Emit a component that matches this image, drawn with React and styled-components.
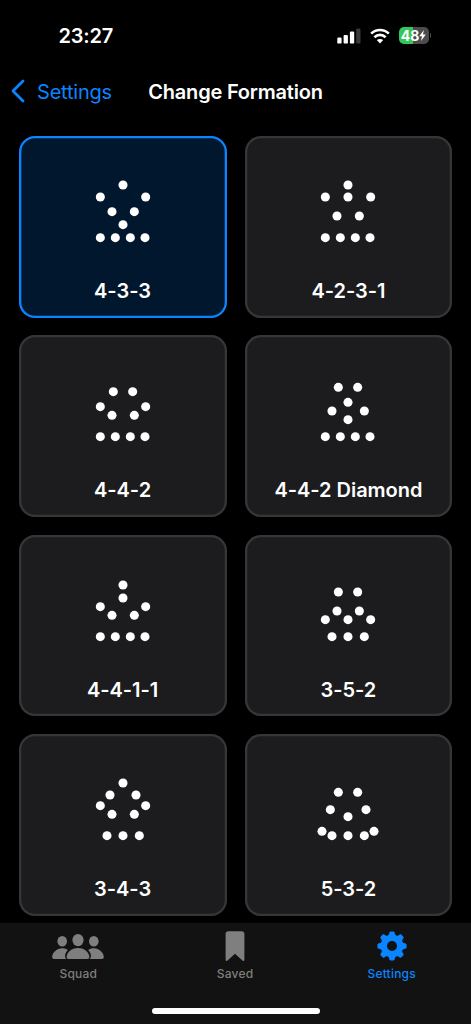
import React, { useState } from "react";
import styled, { createGlobalStyle } from "styled-components";

const backFour = [[-68, 200], [-23, 200], [22, 200], [66, 200]];
const backThree = [[-48, 200], [0, 200], [49, 200]];

// player positions, x is measured from the middle of the pitch
const formations = [
  { name: "4-3-3", players: [[0, 42], [-68, 78], [68, 78], [-33, 122], [34, 122], [0, 161], ...backFour] },
  { name: "4-2-3-1", players: [[0, 42], [-68, 78], [0, 78], [68, 78], [-33, 135], [34, 135], ...backFour] },
  { name: "4-4-2", players: [[-29, 65], [29, 65], [-68, 110], [68, 110], [-33, 136], [34, 136], ...backFour] },
  { name: "4-4-2 Diamond", players: [[-29, 52], [29, 52], [0, 97], [-48, 123], [49, 123], [0, 149], ...backFour] },
  { name: "4-4-1-1", players: [[0, 45], [0, 84], [-68, 110], [68, 110], [-33, 136], [34, 136], ...backFour] },
  { name: "3-5-2", players: [[-29, 66], [29, 66], [-33, 123], [34, 123], [-68, 149], [0, 149], [68, 149], ...backThree] },
  { name: "3-4-3", players: [[0, 42], [-39, 78], [39, 78], [-68, 110], [68, 110], [-33, 136], [34, 136], ...backThree] },
  { name: "5-3-2", players: [[-29, 70], [29, 70], [-53, 122], [54, 122], [0, 143], [-78, 187], [78, 187], ...backThree] },
];

function SignalIcon() {
  return (
    <svg width="24" height="16" viewBox="0 0 24 16" fill="#fff">
      <rect x="0.3" y="9.6" width="4.3" height="6" rx="1.2" />
      <rect x="6.6" y="6.9" width="4.3" height="8.7" rx="1.2" />
      <rect x="12.9" y="3.6" width="4.3" height="12" rx="1.2" />
      <rect x="19.2" y="0.6" width="4.3" height="15" rx="1.2" fill="#39393b" />
    </svg>
  );
}

function WifiIcon() {
  return (
    <svg width="20" height="16" viewBox="0 0 20 16" fill="none" stroke="#fff" strokeWidth="2.7">
      <path d="M1.2 5.6C6.2 0.8 13.8 0.8 18.8 5.6" />
      <path d="M4.4 9.2C7.6 6.2 12.4 6.2 15.6 9.2" />
      <path d="M10 15.4L6.8 12.1C8.7 10.5 11.3 10.5 13.2 12.1Z" fill="#fff" stroke="none" />
    </svg>
  );
}

function SquadIcon() {
  return (
    <svg width="52" height="30" viewBox="0 0 52 30" fill="currentColor">
      <ellipse cx="10.2" cy="10.3" rx="4.8" ry="5.2" />
      <ellipse cx="41.8" cy="10.3" rx="4.8" ry="5.2" />
      <ellipse cx="26" cy="9.1" rx="5.6" ry="6.2" />
      <path d="M14.4 27.9H2C0.8 27.9 0.2 27.2 0.2 26C0.2 22.4 4.4 17.3 10.4 17.3C12.6 17.3 14.3 17.8 15.8 18.9C13.7 21 12.6 23.7 13.2 26.2C13.4 26.9 13.8 27.5 14.4 27.9Z" />
      <path d="M37.6 27.9H50C51.2 27.9 51.8 27.2 51.8 26C51.8 22.4 47.6 17.3 41.6 17.3C39.4 17.3 37.7 17.8 36.2 18.9C38.3 21 39.4 23.7 38.8 26.2C38.6 26.9 38.2 27.5 37.6 27.9Z" />
      <path d="M16.6 27.9C15.3 27.9 14.6 27.2 14.6 26C14.6 22.2 19.1 17.1 26 17.1C32.9 17.1 37.4 22.2 37.4 26C37.4 27.2 36.7 27.9 35.4 27.9Z" />
    </svg>
  );
}

function SavedIcon() {
  return (
    <svg width="20" height="30" viewBox="0 0 20 30" fill="currentColor">
      <path d="M3.4 0.3H16.6C18.4 0.3 19.4 1.3 19.4 3.1V28.4C19.4 30 18.2 30.3 17.2 29.3L10 22.7L2.8 29.3C1.8 30.3 0.6 30 0.6 28.4V3.1C0.6 1.3 1.6 0.3 3.4 0.3Z" />
    </svg>
  );
}

function GearIcon() {
  return (
    <svg width="30" height="30" viewBox="-15 -15 30 30" fill="currentColor">
      <circle r="8.1" fill="none" stroke="currentColor" strokeWidth="6.2" />
      {[0, 45, 90, 135, 180, 225, 270, 315].map(angle => (
        <path
          key={angle}
          transform={`rotate(${angle})`}
          d="M-4.6 -9.8C-3.7 -10.5 -3.2 -11 -2.9 -12.4L-2.6 -13.5C-2.4 -14.3 -1.9 -14.6 -1.2 -14.6H1.2C1.9 -14.6 2.4 -14.3 2.6 -13.5L2.9 -12.4C3.2 -11 3.7 -10.5 4.6 -9.8Z"
        />
      ))}
    </svg>
  );
}

const tabs = [
  { name: "Squad", icon: <SquadIcon /> },
  { name: "Saved", icon: <SavedIcon /> },
  { name: "Settings", icon: <GearIcon /> },
];

function FormationCard({ formation, selected, onSelect }) {
  return (
    <Card $selected={selected} onClick={onSelect}>
      <svg width="80" height="80" viewBox="-120 0 240 240" fill="#fff">
        {formation.players.map(([x, y]) => (
          <circle key={`${x},${y}`} cx={x} cy={y} r="13.6" />
        ))}
      </svg>
      <CardLabel>{formation.name}</CardLabel>
    </Card>
  );
}

function App() {
  const [chosen, setChosen] = useState("4-3-3");
  const [activeTab, setActiveTab] = useState("Settings");

  return (
    <Screen>
      <GlobalStyle />
      <StatusBar>
        <Time>23:27</Time>
        <StatusIcons>
          <SignalIcon />
          <WifiIcon />
          <BatteryGroup>
            <Battery>
              48
              <svg width="7" height="11" viewBox="0 0 7 11" fill="#fff">
                <path d="M4.9 0L0.2 6.2H3L2 11L6.8 4.6H4Z" />
              </svg>
            </Battery>
            <BatteryCap />
          </BatteryGroup>
        </StatusIcons>
      </StatusBar>
      <NavBar>
        <BackButton>
          <svg width="14" height="24" viewBox="0 0 14 24" fill="none" stroke="currentColor" strokeWidth="2.8" strokeLinecap="round" strokeLinejoin="round">
            <path d="M12 2L2 12L12 22" />
          </svg>
          <span>Settings</span>
        </BackButton>
        <Title>Change Formation</Title>
      </NavBar>
      <Grid>
        {formations.map(formation => (
          <FormationCard
            key={formation.name}
            formation={formation}
            selected={chosen === formation.name}
            onSelect={() => setChosen(formation.name)}
          />
        ))}
      </Grid>
      <TabBar>
        <Tabs>
          {tabs.map(tab => (
            <Tab key={tab.name} $active={activeTab === tab.name} onClick={() => setActiveTab(tab.name)}>
              {tab.icon}
              <span>{tab.name}</span>
            </Tab>
          ))}
        </Tabs>
        <HomeIndicator />
      </TabBar>
    </Screen>
  );
}

const GlobalStyle = createGlobalStyle`
  * {
    box-sizing: border-box;
  }

  body {
    margin: 0;
    background: #000;
  }

  button {
    padding: 0;
    border: none;
    background: none;
    font-family: inherit;
    cursor: pointer;
  }

  svg {
    display: block;
    flex-shrink: 0;
  }
`;

const Screen = styled.div`
  display: flex;
  flex-direction: column;
  height: 1024px;
  overflow: hidden;
  background: #000;
  color: #fff;
  font-family: Inter, "Liberation Sans", sans-serif;
`;

const StatusBar = styled.header`
  display: flex;
  justify-content: space-between;
  align-items: center;
  height: 71px;
  padding: 0 40px 0 58.5px;
`;

const Time = styled.span`
  font-size: 20px;
  font-weight: 600;
  letter-spacing: -0.2px;
`;

const StatusIcons = styled.div`
  display: flex;
  align-items: center;
  gap: 9px;
`;

const BatteryGroup = styled.div`
  display: flex;
  align-items: center;
  gap: 1px;
`;

const Battery = styled.div`
  display: flex;
  justify-content: center;
  align-items: center;
  width: 30px;
  height: 17px;
  border-radius: 5px;
  background: linear-gradient(to right, #34c759 48%, #4c4c4e 48%);
  font-size: 14px;
  font-weight: 700;
  letter-spacing: -0.1px;
`;

const BatteryCap = styled.div`
  width: 1.5px;
  height: 5px;
  border-radius: 0 2px 2px 0;
  background: #4c4c4e;
`;

const NavBar = styled.nav`
  display: grid;
  grid-template-columns: 1fr auto 1fr;
  align-items: center;
  height: 40px;
  padding: 0 11px;
`;

const BackButton = styled.button`
  display: flex;
  align-items: center;
  gap: 12px;
  color: #0a84ff;
  font-size: 20px;
  letter-spacing: -0.2px;

  span {
    padding-top: 1px;
  }
`;

const Title = styled.h1`
  margin: 0;
  padding-top: 1px;
  font-size: 20px;
  font-weight: 600;
  letter-spacing: -0.2px;
`;

const Grid = styled.main`
  display: grid;
  grid-template-columns: 1fr 1fr;
  grid-auto-rows: 181.7px;
  gap: 17.7px 18px;
  flex: 1;
  min-height: 0;
  padding: 24.9px 18.6px 0;
`;

const Card = styled.button`
  display: flex;
  flex-direction: column;
  align-items: center;
  padding-top: 35.2px;
  border-radius: 16px;
  background: ${({ $selected }) => ($selected ? "#01172e" : "#1c1c1e")};
  box-shadow: inset 0 0 0 2.3px ${({ $selected }) => ($selected ? "#0a84ff" : "#363638")};
  color: #fff;
`;

const CardLabel = styled.span`
  margin-top: 28px;
  font-size: 20px;
  font-weight: 600;
  line-height: 25px;
  letter-spacing: -0.03px;
`;

const TabBar = styled.footer`
  display: flex;
  flex-direction: column;
  align-items: center;
  justify-content: space-between;
  height: 101px;
  padding: 8px 0 10px;
  background: #121212;
`;

const Tabs = styled.div`
  display: grid;
  grid-template-columns: repeat(3, 1fr);
  width: 100%;
  padding-right: 1px;
`;

const Tab = styled.button`
  display: flex;
  flex-direction: column;
  align-items: center;
  gap: 5px;
  color: ${({ $active }) => ($active ? "#0a84ff" : "#7f7f7f")};
  font-size: 12px;
  font-weight: 500;
  line-height: 15px;
  letter-spacing: 0.2px;
`;

const HomeIndicator = styled.div`
  width: 168px;
  height: 6px;
  border-radius: 3px;
  background: #fff;
`;

export default App;
